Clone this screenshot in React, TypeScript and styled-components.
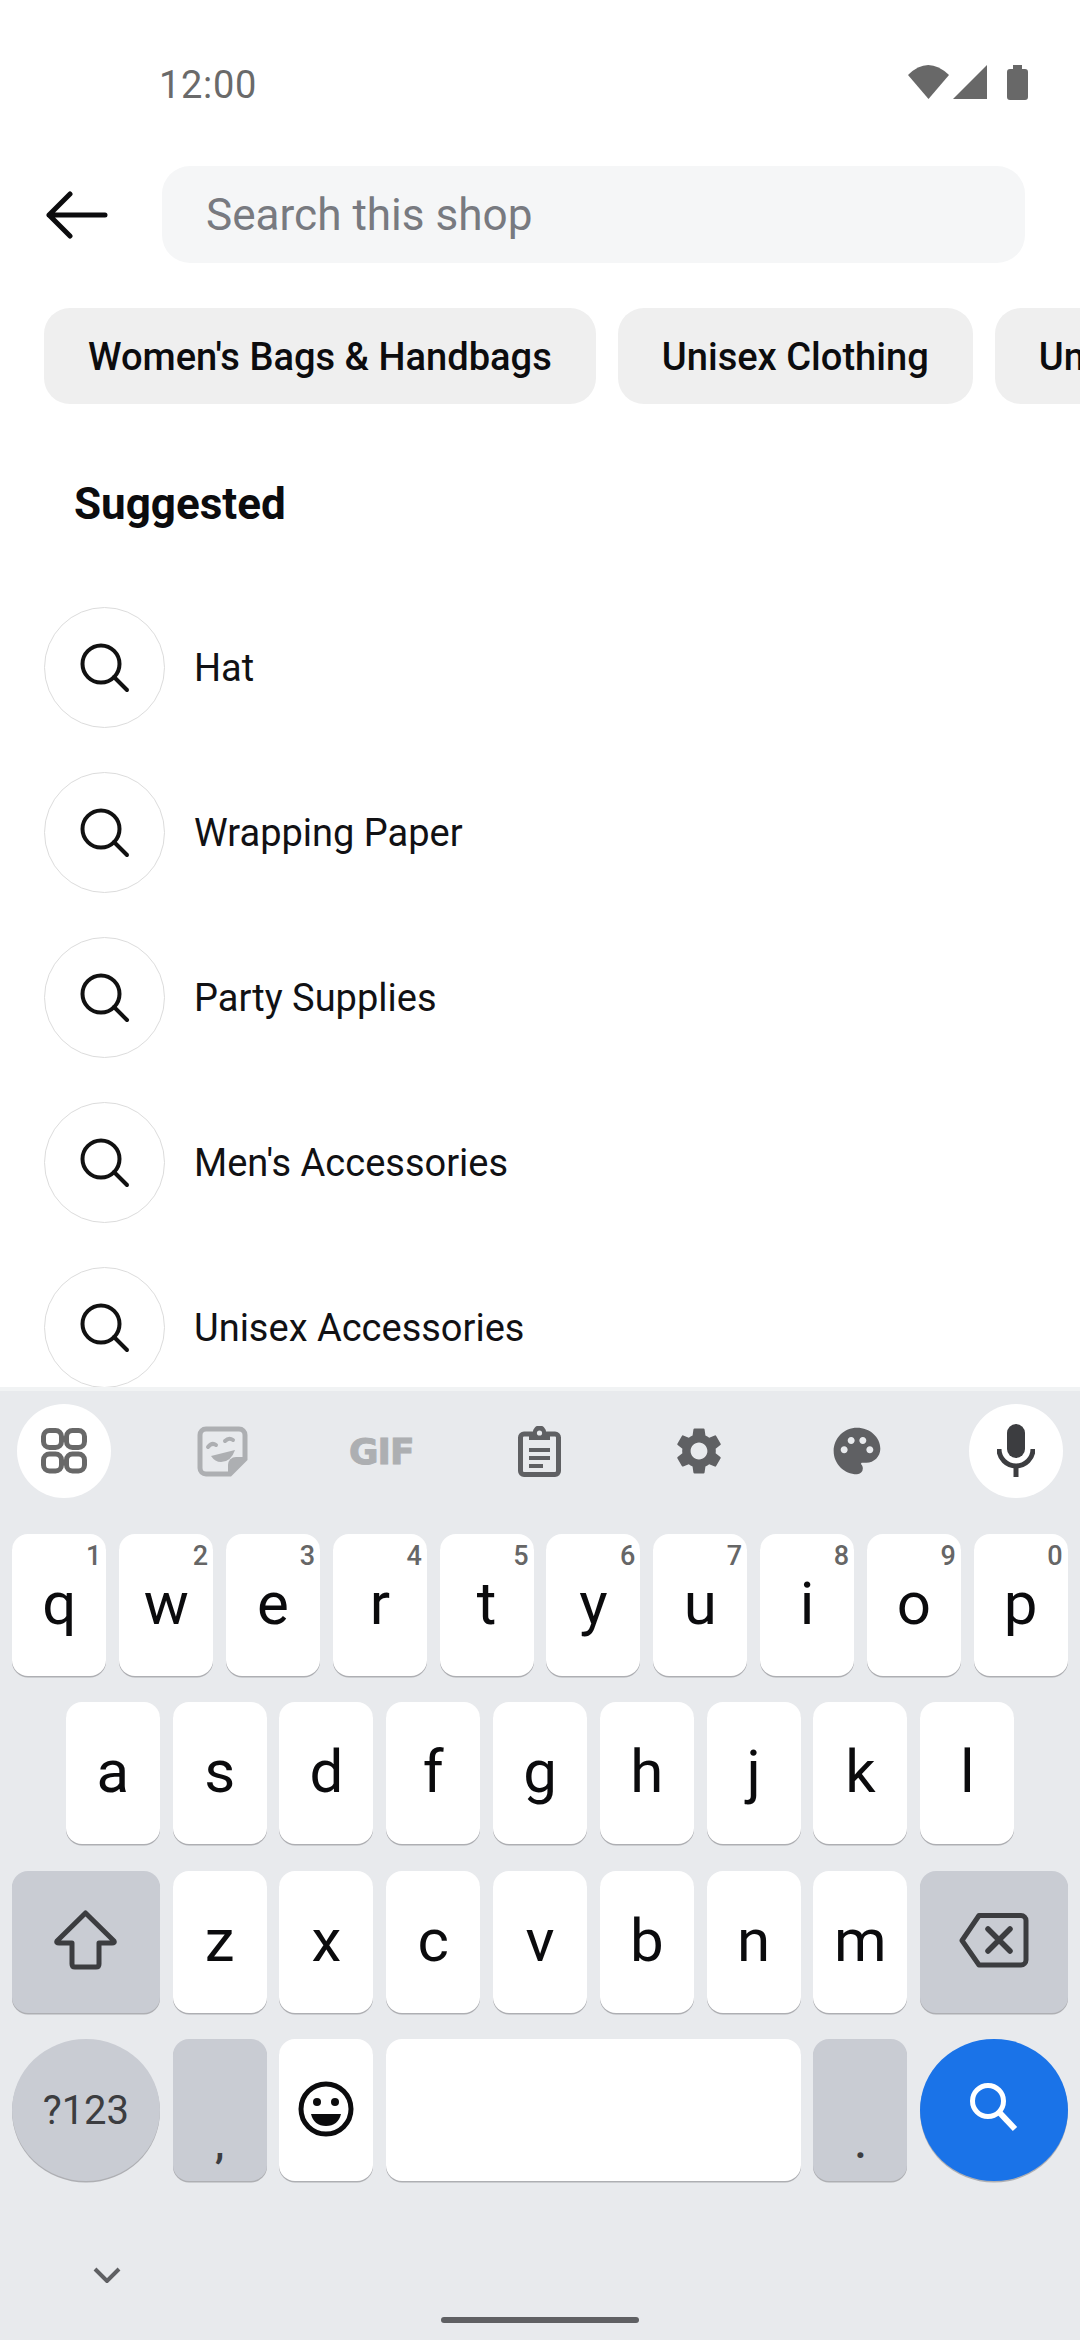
import React from 'react'
import styled, { createGlobalStyle } from 'styled-components'
import { MdPalette, MdSettings } from 'react-icons/md'

const rows = ['qwertyuiop', 'asdfghjkl', 'zxcvbnm']
const hints = '1234567890'
const chips = ["Women's Bags & Handbags", 'Unisex Clothing', 'Unisex Accessories']
const suggestions = ['Hat', 'Wrapping Paper', 'Party Supplies', "Men's Accessories", 'Unisex Accessories']

export default function App () {
  return (
    <Page>
      <GlobalStyle />
      <Main>
        <StatusBar>
          <Time>12:00</Time>
          <StatusIcons>
            <svg width="41" height="34" viewBox="0 0 41 34">
              <path d="M0 10 Q20 -10 41 10 L20.5 34Z" fill="#686868" />
            </svg>
            <svg width="34" height="34" viewBox="0 0 34 34">
              <path d="M34 0 V34 H0Z" fill="#686868" />
            </svg>
            <BatteryIcon width="21" height="35" viewBox="0 0 21 35">
              <path d="M6 0 H15 V4 H18 a3 3 0 0 1 3 3 V32 a3 3 0 0 1 -3 3 H3 a3 3 0 0 1 -3 -3 V7 a3 3 0 0 1 3 -3 H6Z" fill="#686868" />
            </BatteryIcon>
          </StatusIcons>
        </StatusBar>

        <SearchRow>
          <BackIcon width="62" height="48" viewBox="0 0 62 48">
            <path d="M3 24 H59 M24 3 L3 24 L24 45" fill="none" stroke="#0c0c0e" strokeWidth="5" strokeLinecap="round" strokeLinejoin="round" />
          </BackIcon>
          <SearchField>Search this shop</SearchField>
        </SearchRow>

        <ChipRow>
          {chips.map(chip => <Chip key={chip}>{chip}</Chip>)}
        </ChipRow>

        <SectionTitle>Suggested</SectionTitle>

        <SuggestionList>
          {suggestions.map(text => (
            <Suggestion key={text}>
              <SuggestionIcon>
                <svg width="50" height="50" viewBox="0 0 50 50">
                  <circle cx="21" cy="21" r="18.5" fill="none" stroke="#111" strokeWidth="4" />
                  <path d="M34 34 L47 47" stroke="#111" strokeWidth="4" strokeLinecap="round" />
                </svg>
              </SuggestionIcon>
              <SuggestionText>{text}</SuggestionText>
            </Suggestion>
          ))}
        </SuggestionList>
      </Main>

      <Keyboard>
        <Toolbar>
          <ToolCell $pill>
            <svg width="46" height="46" viewBox="0 0 46 46" fill="none" stroke="#686868" strokeWidth="5">
              <rect x="2.5" y="2.5" width="18" height="17" rx="6" />
              <rect x="25.5" y="2.5" width="18" height="17" rx="6" />
              <rect x="2.5" y="26" width="18" height="17" rx="6" />
              <rect x="25.5" y="26" width="18" height="17" rx="6" />
            </svg>
          </ToolCell>
          <ToolCell>
            <svg width="51" height="51" viewBox="0 0 51 51">
              <path d="M9 3 H42 a6 6 0 0 1 6 6 V33 L33 48 H9 a6 6 0 0 1 -6 -6 V9 a6 6 0 0 1 6 -6Z" fill="none" stroke="#adafb2" strokeWidth="5" />
              <path d="M50 31 H39 a8 8 0 0 0 -8 8 V50Z" fill="#adafb2" />
              <path d="M11 21 Q15 16 19 19 M28 15 Q32 11 36 14" fill="none" stroke="#adafb2" strokeWidth="4" strokeLinecap="round" />
              <path d="M14 30 L38 24 Q34 36 24 36 Q18 36 14 30Z" fill="#adafb2" />
            </svg>
          </ToolCell>
          <ToolCell>
            <GifLabel>GIF</GifLabel>
          </ToolCell>
          <ToolCell>
            <svg width="43" height="51" viewBox="0 0 43 51">
              <path d="M6 8 H37 a3.5 3.5 0 0 1 3.5 3.5 V45 a3.5 3.5 0 0 1 -3.5 3.5 H6 a3.5 3.5 0 0 1 -3.5 -3.5 V11.5 A3.5 3.5 0 0 1 6 8Z" fill="none" stroke="#5f6063" strokeWidth="5" />
              <path d="M11 6 H15 a6.5 6.5 0 0 1 13 0 H32 V14 H11Z" fill="#5f6063" />
              <circle cx="21.5" cy="7" r="2.6" fill="#e8eaed" />
              <path d="M11 22 H32 V26 H11Z M11 30 H32 V34 H11Z M11 38 H25 V42 H11Z" fill="#5f6063" />
            </svg>
          </ToolCell>
          <ToolCell>
            <MdSettings size={56} color="#5f6063" />
          </ToolCell>
          <ToolCell>
            <MdPalette size={56} color="#5f6063" />
          </ToolCell>
          <ToolCell $pill>
            <svg width="38" height="54" viewBox="0 0 38 54">
              <rect x="10" y="0" width="18" height="34" rx="9" fill="#3c3d40" />
              <path d="M2 25 a17 17 0 0 0 34 0" fill="none" stroke="#3c3d40" strokeWidth="5" />
              <path d="M19 40 V53" stroke="#3c3d40" strokeWidth="5" />
            </svg>
          </ToolCell>
        </Toolbar>

        <KeyRows>
          <KeyRow>
            {rows[0].split('').map((letter, i) => (
              <Key key={letter}>
                <Hint>{hints[i]}</Hint>
                {letter}
              </Key>
            ))}
          </KeyRow>
          <KeyRow>
            {rows[1].split('').map(letter => <Key key={letter}>{letter}</Key>)}
          </KeyRow>
          <KeyRow>
            <Key $wide $mod>
              <svg width="63" height="60" viewBox="0 0 63 60">
                <path d="M31.5 3 L60 31 Q61 33 58 33 H45 V54 Q45 57 42 57 H21 Q18 57 18 54 V33 H5 Q2 33 3 31Z" fill="none" stroke="#3c3d40" strokeWidth="5" strokeLinejoin="round" />
              </svg>
            </Key>
            {rows[2].split('').map(letter => <Key key={letter}>{letter}</Key>)}
            <Key $wide $mod>
              <svg width="70" height="55" viewBox="0 0 70 55">
                <path d="M20 2.5 H62 a5 5 0 0 1 5 5 V47 a5 5 0 0 1 -5 5 H20 L3 27.5Z" fill="none" stroke="#3c3d40" strokeWidth="5" strokeLinejoin="round" />
                <path d="M29 16 L51 38 M51 16 L29 38" stroke="#3c3d40" strokeWidth="5.5" strokeLinecap="round" />
              </svg>
            </Key>
          </KeyRow>
          <KeyRow>
            <Key $wide $mod $round><ModeLabel>?123</ModeLabel></Key>
            <Key $mod><Punctuation>,</Punctuation></Key>
            <Key>
              <svg width="56" height="56" viewBox="0 0 56 56">
                <circle cx="28" cy="28" r="25" fill="none" stroke="#0b0b0d" strokeWidth="5" />
                <circle cx="19" cy="21" r="4" fill="#0b0b0d" />
                <circle cx="37" cy="21" r="4" fill="#0b0b0d" />
                <path d="M13 33 H43 Q40 45 28 45 Q16 45 13 33Z" fill="#0b0b0d" />
              </svg>
            </Key>
            <SpaceKey />
            <Key $mod><Punctuation>.</Punctuation></Key>
            <SearchKey>
              <svg width="50" height="50" viewBox="0 0 50 50">
                <circle cx="19" cy="18" r="15.5" fill="none" stroke="#fff" strokeWidth="5" />
                <path d="M30 29 L46 46" stroke="#fff" strokeWidth="6" />
              </svg>
            </SearchKey>
          </KeyRow>
        </KeyRows>

        <HideChevron width="28" height="16" viewBox="0 0 28 16">
          <path d="M2 2 L14 14 L26 2" fill="none" stroke="#5f6063" strokeWidth="4" />
        </HideChevron>
        <NavHandle />
      </Keyboard>
    </Page>
  )
}

const GlobalStyle = createGlobalStyle`
  html, body {
    margin: 0;
    padding: 0;
    background: #fff;
  }

  * {
    box-sizing: border-box;
  }
`

const Page = styled.div`
  width: 1080px;
  height: 2340px;
  display: flex;
  flex-direction: column;
  overflow: hidden;
  font-family: Roboto, "Noto Sans", sans-serif;
  background: #fff;
`

const Main = styled.main`
  flex: 1;
  min-height: 0;
  overflow: hidden;
`

const StatusBar = styled.div`
  height: 166px;
  padding: 66px 52px 0 159px;
  display: flex;
  justify-content: space-between;
  align-items: flex-start;
`

const Time = styled.span`
  font-size: 38px;
  line-height: 38px;
  letter-spacing: 0.7px;
  color: #6a6a6a;
`

const StatusIcons = styled.div`
  display: flex;
  gap: 4px;
  margin: -1px 0 0 2px;
`

const BatteryIcon = styled.svg`
  margin-left: 16px;
`

const SearchRow = styled.div`
  display: flex;
  align-items: center;
  padding: 0 55px 0 46px;
`

const BackIcon = styled.svg`
  flex: none;
  margin-right: 54px;
`

const SearchField = styled.div`
  flex: 1;
  height: 97px;
  padding-left: 44px;
  display: flex;
  align-items: center;
  border-radius: 28px;
  background: #f5f6f7;
  color: #787a80;
  font-size: 44.1px;
`

const ChipRow = styled.div`
  display: flex;
  gap: 22px;
  margin-top: 45px;
  padding-left: 44px;
  overflow: hidden;
`

const Chip = styled.div`
  flex: none;
  height: 96px;
  padding: 2px 44px 0;
  display: flex;
  align-items: center;
  border-radius: 26px;
  background: #efefef;
  color: #0c0c0e;
  font-size: 38.1px;
  font-weight: 500;
`

const SectionTitle = styled.h2`
  margin: 75px 0 0;
  padding-left: 74px;
  font-size: 44px;
  line-height: 50px;
  font-weight: 700;
  color: #0c0c0e;
`

const SuggestionList = styled.ul`
  list-style: none;
  margin: 78px 0 0;
  padding: 0 0 0 44px;
  display: flex;
  flex-direction: column;
  gap: 44px;
`

const Suggestion = styled.li`
  display: flex;
  align-items: center;
  gap: 29px;
`

const SuggestionIcon = styled.div`
  flex: none;
  width: 121px;
  height: 121px;
  display: flex;
  align-items: center;
  justify-content: center;
  border: 1.5px solid #dcdcdc;
  border-radius: 50%;
`

const SuggestionText = styled.span`
  font-size: 38px;
  color: #111114;
`

const Keyboard = styled.section`
  flex: none;
  height: 953px;
  padding-top: 13px;
  display: flex;
  flex-direction: column;
  position: relative;
  border-top: 4px solid #f1f3f4;
  background: #e8eaed;
`

const Toolbar = styled.div`
  display: flex;
  justify-content: space-between;
  padding: 0 17px;
`

const ToolCell = styled.div<{ $pill?: boolean }>`
  width: 94px;
  height: 94px;
  display: flex;
  align-items: center;
  justify-content: center;
  border-radius: 50%;
  background: ${p => (p.$pill ? '#fff' : 'transparent')};
`

const GifLabel = styled.span`
  font-family: "DejaVu Sans", sans-serif;
  font-size: 36px;
  font-weight: 700;
  letter-spacing: -1px;
  -webkit-text-stroke: 1px #adafb2;
  color: #adafb2;
`

const KeyRows = styled.div`
  margin-top: 36px;
  padding: 0 12px;
  display: flex;
  flex-direction: column;
  gap: 26.4px;
`

const KeyRow = styled.div`
  display: flex;
  justify-content: center;
  gap: 12.8px;
`

const Key = styled.div<{ $wide?: boolean; $mod?: boolean; $round?: boolean }>`
  flex: none;
  position: relative;
  width: ${p => (p.$wide ? '147.8px' : '94px')};
  height: 142px;
  padding-bottom: ${p => (p.$round ? '0' : '3px')};
  display: flex;
  align-items: center;
  justify-content: center;
  border-radius: ${p => (p.$round ? '50%' : '16px')};
  background: ${p => (p.$mod ? '#c9ccd3' : '#fff')};
  box-shadow: 0 1.5px 0 #aeafb3;
  font-size: 60px;
  color: #0b0b0d;
`

const SpaceKey = styled(Key)`
  flex: 1;
`

const SearchKey = styled(Key)`
  width: 147.8px;
  padding: 0 0 4px 0;
  border-radius: 50%;
  background: #1a73e8;
`

const Hint = styled.span`
  position: absolute;
  top: 6px;
  right: 5px;
  font-size: 27px;
  line-height: 32px;
  font-weight: 500;
  color: #666;
`

const ModeLabel = styled.span`
  font-size: 40px;
  color: #3c3d40;
`

const Punctuation = styled.span`
  align-self: flex-end;
  margin-bottom: 14px;
  font-size: 38px;
  line-height: 38px;
  font-weight: 700;
  color: #3c3d40;
`

const HideChevron = styled.svg`
  position: absolute;
  left: 93px;
  bottom: 57px;
`

const NavHandle = styled.div`
  position: absolute;
  left: 441px;
  bottom: 17px;
  width: 198px;
  height: 6px;
  border-radius: 3px;
  background: #5f6063;
`
